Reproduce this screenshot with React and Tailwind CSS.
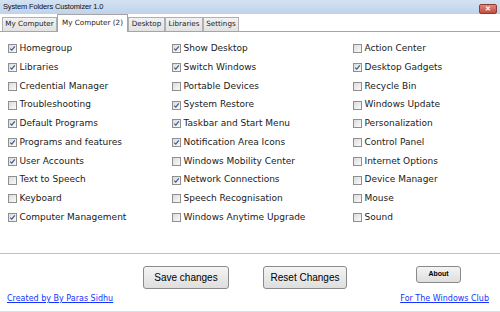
import React from "react";

const columns = [
  [
    ["Homegroup", true],
    ["Libraries", true],
    ["Credential Manager", false],
    ["Troubleshooting", false],
    ["Default Programs", true],
    ["Programs and features", true],
    ["User Accounts", true],
    ["Text to Speech", false],
    ["Keyboard", false],
    ["Computer Management", true],
  ],
  [
    ["Show Desktop", true],
    ["Switch Windows", true],
    ["Portable Devices", false],
    ["System Restore", true],
    ["Taskbar and Start Menu", true],
    ["Notification Area Icons", true],
    ["Windows Mobility Center", false],
    ["Network Connections", true],
    ["Speech Recognisation", false],
    ["Windows Anytime Upgrade", false],
  ],
  [
    ["Action Center", false],
    ["Desktop Gadgets", true],
    ["Recycle Bin", false],
    ["Windows Update", false],
    ["Personalization", false],
    ["Control Panel", false],
    ["Internet Options", false],
    ["Device Manager", false],
    ["Mouse", false],
    ["Sound", false],
  ],
];

const tabs = [
  { label: "My Computer", w: "w-[55px]" },
  { label: "My Computer (2)", w: "w-[71px]", active: true },
  { label: "Desktop", w: "w-[37px]" },
  { label: "Libraries", w: "w-[38px]" },
  { label: "Settings", w: "w-[36px]" },
];

function Check({ checked }) {
  return (
    <span className="w-[9px] h-[9px] border border-[#8f8f8f] bg-gradient-to-br from-[#dcdcdc] to-[#fafafa] flex items-center justify-center shrink-0">
      {checked && (
        <svg width="7" height="7" viewBox="0 0 7 7">
          <path d="M1.2 3.6 L2.8 5.2 L5.8 1.4" fill="none" stroke="#3d5a98" strokeWidth="1.2" />
        </svg>
      )}
    </span>
  );
}

function Button({ children, className }) {
  return (
    <button className={`border border-[#8a8a8a] rounded-[3px] bg-gradient-to-b from-[#f4f4f4] to-[#dedede] text-black font-['Liberation_Sans',Arial,sans-serif] ${className}`}>
      {children}
    </button>
  );
}

export default function App() {
  return (
    <div className="w-[500px] h-[312px] flex flex-col bg-white overflow-hidden">
      {/* TITLE BAR */}
      <div className="h-[14px] flex items-center justify-between pl-[3px] pr-[3px] bg-gradient-to-b from-[#d3e2f3] to-[#bed3eb]">
        <span className="text-[7.5px] leading-none tracking-[-0.15px] text-[#111] font-['Liberation_Sans',Arial,sans-serif]">
          System Folders Customizer 1.0
        </span>
        <span className="w-[18px] h-[10px] mt-[3px] rounded-[2px] border border-[#8c3c34] bg-gradient-to-b from-[#e0867a] to-[#c24b3e] flex items-center justify-center text-white text-[7px] leading-none font-bold">
          ✕
        </span>
      </div>

      {/* TABS */}
      <div className="h-[18px] flex items-end pl-[2px] border-b border-[#a5a5a5] font-['DejaVu_Sans',sans-serif] text-[7.2px] text-[#1a1a1a]">
        {tabs.map((t) =>
          t.active ? (
            <div key={t.label} className={`${t.w} h-[18px] -mb-px bg-white border border-b-0 border-[#a5a5a5] flex items-center justify-center`}>
              {t.label}
            </div>
          ) : (
            <div key={t.label} className={`${t.w} h-[14px] bg-gradient-to-b from-[#f2f2f2] to-[#e2e2e2] border border-b-0 border-[#b0b0b0] flex items-center justify-center`}>
              {t.label}
            </div>
          )
        )}
      </div>

      {/* CHECKBOX GRID */}
      <div className="flex-1 flex pt-[7.5px] pl-[7.5px] font-['DejaVu_Sans',sans-serif] text-[9px] text-[#1a1a1a] border-b border-[#c2c2c2]">
        {columns.map((col, ci) => (
          <div key={ci} className={ci === 0 ? "w-[164px]" : ci === 1 ? "w-[181px]" : "flex-1"}>
            {col.map(([label, checked]) => (
              <div key={label} className="h-[18.75px] flex items-center gap-[3px]">
                <Check checked={checked} />
                <span>{label}</span>
              </div>
            ))}
          </div>
        ))}
      </div>

      {/* FOOTER */}
      <div className="h-[58px] flex flex-col border-b border-[#d8e0ea]">
        <div className="flex items-start pt-[12px] pl-[143px]">
          <Button className="w-[86px] h-[23px] text-[10px]">Save changes</Button>
          <Button className="w-[84px] h-[23px] ml-[34px] text-[10px]">Reset Changes</Button>
          <Button className="w-[45px] h-[17px] ml-[69px] text-[7px] font-bold">About</Button>
        </div>
        <div className="flex justify-between pl-[7px] pr-[11px] mt-[5px] font-['DejaVu_Sans',sans-serif] text-[8px] leading-[10px] text-[#1633ff] underline">
          <a href="#">Created by By Paras Sidhu</a>
          <a href="#">For The Windows Club</a>
        </div>
      </div>
    </div>
  );
}
